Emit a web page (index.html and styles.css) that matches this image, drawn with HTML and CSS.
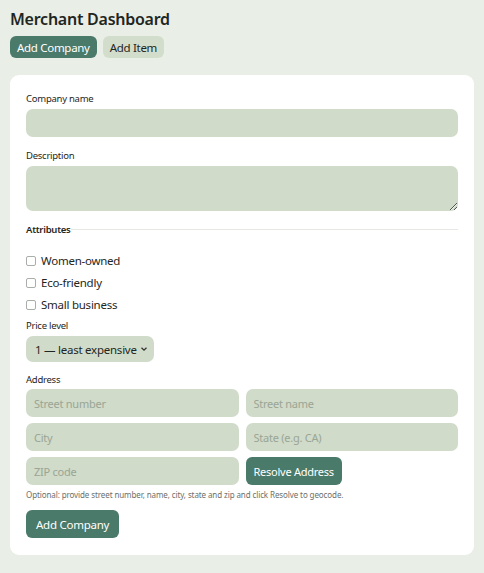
FILE: index.html
```html
<!DOCTYPE html>
<html lang="en">
<head>
  <meta charset="UTF-8" />
  <meta name="viewport" content="width=device-width, initial-scale=1.0" />
  <title>Merchant Dashboard</title>
  <link rel="stylesheet" href="styles.css">
</head>
<body>
  <h1>Merchant Dashboard</h1>
  <div class="tabs">
    <button class="tab active">Add Company</button>
    <button class="tab">Add Item</button>
  </div>

  <div class="card">
    <form id="company-form">
      <label>Company name</label>
      <input class="field" name="name" />

      <label>Description</label>
      <textarea class="field area" name="description"></textarea>

      <fieldset class="attrs">
        <legend>Attributes</legend>
        <label class="check"><input type="checkbox" /> Women-owned</label>
        <label class="check"><input type="checkbox" /> Eco-friendly</label>
        <label class="check"><input type="checkbox" /> Small business</label>
      </fieldset>

      <label>Price level</label>
      <div class="select-wrap">
        <select class="field select" name="price">
          <option>1 — least expensive</option>
          <option>2</option>
          <option>3</option>
          <option>4 — most expensive</option>
        </select>
        <svg class="chev" width="8" height="6" viewBox="0 0 8 6"><path d="M1.5 1.8 L4 4.2 L6.5 1.8" fill="none" stroke="#333" stroke-width="1.3"/></svg>
      </div>

      <label class="addr-label">Address</label>
      <div class="addr-grid">
        <input class="field" placeholder="Street number" />
        <input class="field" placeholder="Street name" />
        <input class="field" placeholder="City" />
        <input class="field" placeholder="State (e.g. CA)" />
        <input class="field" placeholder="ZIP code" />
        <div><button type="button" class="btn">Resolve Address</button></div>
      </div>
      <p class="hint">Optional: provide street number, name, city, state and zip and click Resolve to geocode.</p>

      <button class="btn submit" type="submit">Add Company</button>
    </form>
  </div>
</body>
</html>
```

FILE: styles.css
```css
body {
  margin: 0;
  padding: 8px 10px 19px;
  background: #e9eee6;
  font-family: "Noto Sans", "Open Sans", sans-serif;
  letter-spacing: -0.25px;
  color: #1f2622;
}
h1 {
  font-size: 16px;
  font-weight: 600;
  margin: 0 0 6px;
  line-height: 22px;
}
.tabs {
  display: flex;
  gap: 6px;
  margin-bottom: 17px;
}
.tab {
  font-family: inherit;
  font-size: 11.5px;
  letter-spacing: -0.3px;
  border: none;
  border-radius: 6px;
  padding: 0 7px;
  height: 22px;
  background: #d3ddcc;
  color: #1f2622;
  cursor: pointer;
}
.tab.active {
  background: #4a7a6a;
  color: #fff;
}
.card {
  background: #fff;
  border-radius: 9px;
  padding: 17px 16px 17px;
}
form > label {
  display: block;
  font-size: 9.5px;
  line-height: 14px;
  margin-bottom: 3px;
}
.field {
  display: block;
  box-sizing: border-box;
  width: 100%;
  height: 28px;
  border: none;
  border-radius: 7px;
  background: #d0dbc9;
  font-family: inherit;
  font-size: 11px;
  letter-spacing: -0.25px;
  padding: 0 8px;
  color: #1f2622;
  outline: none;
}
.field::placeholder {
  color: #9aa595;
}
form > .field {
  margin-bottom: 12px;
}
.area {
  height: 45px;
  resize: vertical;
  margin-bottom: 10px;
}
.attrs {
  border: none;
  border-top: 1px solid #e6e8e4;
  margin: 0;
  padding: 17px 0 0;
}
.attrs legend {
  padding: 0;
  font-size: 9.5px;
  font-weight: 600;
}
.check {
  display: flex;
  align-items: center;
  gap: 5px;
  font-size: 11.5px;
  line-height: 16px;
  margin-bottom: 6px;
}
.check input {
  appearance: none;
  box-sizing: border-box;
  margin: 0;
  width: 10px;
  height: 10px;
  border: 1px solid #a9aea9;
  border-radius: 2px;
  background: #fff;
}
.check input:checked {
  background: #4a7a6a;
  border-color: #4a7a6a;
}
.select-wrap {
  position: relative;
  width: 128px;
  margin-bottom: 11px;
}
.select {
  appearance: none;
  height: 26px;
  font-size: 11.5px;
  padding: 0 9px;
}
.chev {
  position: absolute;
  right: 6px;
  top: 10px;
}
form > .addr-label {
  margin-bottom: 2px;
}
.addr-grid {
  display: grid;
  grid-template-columns: 1fr 1fr;
  gap: 6px 7px;
}
.btn {
  font-family: inherit;
  font-size: 11px;
  letter-spacing: -0.25px;
  height: 28px;
  padding: 0 8px;
  border: none;
  border-radius: 6px;
  background: #4a7a6a;
  color: #fff;
  cursor: pointer;
}
.hint {
  font-size: 8px;
  letter-spacing: -0.1px;
  color: #6b706c;
  margin: 4px 0 10px;
}
.submit {
  height: 28px;
  padding: 0 10px;
  font-size: 11.5px;
}
```
